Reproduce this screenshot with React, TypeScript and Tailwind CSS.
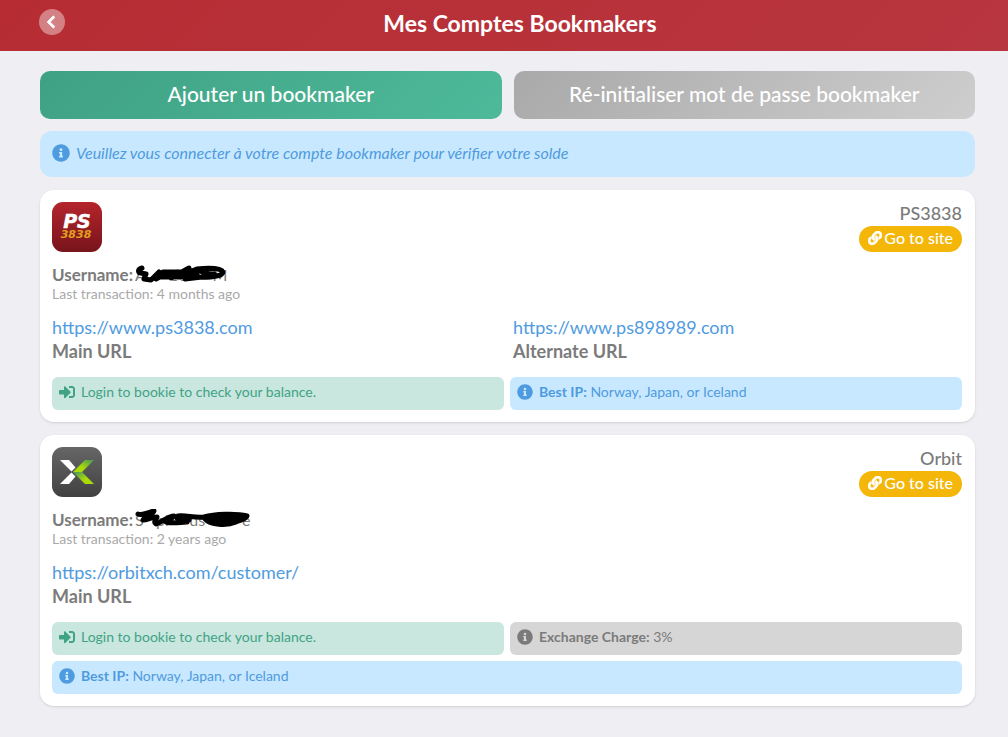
import type { ReactNode } from "react";
import { FaChevronLeft, FaInfoCircle, FaLink, FaSignInAlt } from "react-icons/fa";

type Notice = {
  tone: "green" | "blue" | "gray";
  label?: string;
  text: string;
  wide?: boolean;
};

type Bookmaker = {
  name: string;
  logo: ReactNode;
  username: string;
  mask: ReactNode;
  lastTransaction: string;
  urls: { href: string; label: string }[];
  notices: Notice[];
};

const TONES = {
  green: "bg-[#c9e6df] text-[#3fa384]",
  blue: "bg-[#c8e8ff] text-[#4f9be0]",
  gray: "bg-[#d6d6d6] text-[#7b7b7b]",
};

function PsLogo() {
  return (
    <svg viewBox="0 0 50 50" className="size-[50px]" role="img" aria-label="PS3838">
      <defs>
        <linearGradient id="ps-bg" x1="0" y1="0" x2="0" y2="1">
          <stop offset="0" stopColor="#b5242c" />
          <stop offset="1" stopColor="#77141b" />
        </linearGradient>
      </defs>
      <rect width="50" height="50" rx="11" fill="url(#ps-bg)" />
      <text
        x="25"
        y="26"
        textAnchor="middle"
        fill="#fff"
        stroke="#fff"
        strokeWidth="0.5"
        fontFamily="DejaVu Sans, sans-serif"
        fontSize="19"
        fontWeight="700"
        fontStyle="italic"
      >
        PS
      </text>
      <text
        x="24"
        y="36"
        textAnchor="middle"
        fill="#e0a020"
        fontFamily="DejaVu Sans, sans-serif"
        fontSize="11"
        fontWeight="700"
        fontStyle="italic"
      >
        3838
      </text>
    </svg>
  );
}

function OrbitLogo() {
  return (
    <svg viewBox="0 0 50 50" className="size-[50px]" role="img" aria-label="Orbit">
      <defs>
        <linearGradient id="orbit-bg" x1="0" y1="0" x2="0" y2="1">
          <stop offset="0" stopColor="#666" />
          <stop offset="1" stopColor="#414141" />
        </linearGradient>
        <linearGradient id="orbit-top" x1="0" y1="1" x2="1" y2="0">
          <stop offset="0.4" stopColor="#a9db06" />
          <stop offset="0.9" stopColor="#55a052" />
        </linearGradient>
        <linearGradient id="orbit-bottom" x1="0" y1="0" x2="1" y2="1">
          <stop offset="0.1" stopColor="#55a052" />
          <stop offset="0.6" stopColor="#a9db06" />
        </linearGradient>
      </defs>
      <rect width="50" height="50" rx="11" fill="url(#orbit-bg)" />
      <path d="M8 13h9l6.500 7.500-4 4z" fill="#fff" />
      <path d="M8 37h9l6.500-7.500-4-4z" fill="#fff" />
      <path d="M33 13h9L30 25h-9z" fill="url(#orbit-top)" />
      <path d="M21 25h9l12 12h-9z" fill="url(#orbit-bottom)" />
    </svg>
  );
}

function ShortMask() {
  return (
    <svg
      viewBox="0 0 92 20"
      className="absolute left-0 top-0 h-5 w-[92px]"
      fill="none"
      stroke="#000"
      strokeWidth="5"
      strokeLinecap="round"
      strokeLinejoin="round"
      aria-hidden="true"
    >
      <path d="M7 4C3 5 2 9 6 9l5 1-2 5 7 1 8-8-3 7 13-7 2 6L54 4 40 13l22-8-12 10 17-2c7 1 21-1 21-5C86 4 72 4 62 5c5 4 10 5 17 5M20 13h14l8-5M28 8h20M44 13l18-3" />
    </svg>
  );
}

function LongMask() {
  return (
    <svg
      viewBox="0 0 118 20"
      className="absolute left-0 top-0 h-5 w-[118px]"
      fill="none"
      stroke="#000"
      strokeWidth="5"
      strokeLinecap="round"
      strokeLinejoin="round"
      aria-hidden="true"
    >
      <path d="M3 5c5 2 10-2 16-3-1 4-9 5-11 9 5 0 8-3 14-3-2 4-4 5-1 7 6-2 12-8 18-8-1 3-8 4-8 6 7 2 15 0 21 0-2-3-6-4-9-6 8-1 16 2 26 1 10-3 32-4 43-1-1 4-8 4-11 6-9 4-26 3-31-3 10 4 22 4 36-1-12 0-22 0-30 0M42 9l12 2" />
    </svg>
  );
}

const BOOKMAKERS: Bookmaker[] = [
  {
    name: "PS3838",
    logo: <PsLogo />,
    username: "A      8S      M",
    mask: <ShortMask />,
    lastTransaction: "4 months ago",
    urls: [
      { href: "https://www.ps3838.com", label: "Main URL" },
      { href: "https://www.ps898989.com", label: "Alternate URL" },
    ],
    notices: [
      { tone: "green", text: "Login to bookie to check your balance." },
      { tone: "blue", label: "Best IP:", text: "Norway, Japan, or Iceland" },
    ],
  },
  {
    name: "Orbit",
    logo: <OrbitLogo />,
    username: "S   pi     us         e",
    mask: <LongMask />,
    lastTransaction: "2 years ago",
    urls: [{ href: "https://orbitxch.com/customer/", label: "Main URL" }],
    notices: [
      { tone: "green", text: "Login to bookie to check your balance." },
      { tone: "gray", label: "Exchange Charge:", text: "3%" },
      { tone: "blue", label: "Best IP:", text: "Norway, Japan, or Iceland", wide: true },
    ],
  },
];

function NoticeBar({ notice }: { notice: Notice }) {
  const Icon = notice.tone === "green" ? FaSignInAlt : FaInfoCircle;

  return (
    <p
      className={`flex h-[33px] items-center gap-1.5 rounded-md px-[7px] pb-1 text-sm ${TONES[notice.tone]} ${notice.wide ? "col-span-2" : ""}`}
    >
      <Icon className="size-4 shrink-0" />
      <span>
        {notice.label && <b>{notice.label}</b>} {notice.text}
      </span>
    </p>
  );
}

function BookmakerCard({ bookmaker }: { bookmaker: Bookmaker }) {
  return (
    <article className="rounded-[14px] bg-white py-3 pr-[13px] pl-3 shadow-sm">
      <div className="flex items-start justify-between">
        {bookmaker.logo}
        <div className="flex flex-col items-end">
          <h2 className="pb-0.5 text-lg leading-[22px] font-medium">{bookmaker.name}</h2>
          <a
            href={bookmaker.urls[0].href}
            className="flex h-[26px] items-center gap-0.5 rounded-full bg-[#f3b609] px-[9px] pb-0.5 text-base font-medium text-white"
          >
            <FaLink className="size-3.5" strokeWidth={30} />
            Go to site
          </a>
        </div>
      </div>

      <div className="mt-3">
        <p className="flex gap-0.5 text-base leading-[21px]">
          <b className="text-[17px]">Username:</b>
          <span className="relative whitespace-pre">
            {bookmaker.username}
            {bookmaker.mask}
          </span>
        </p>
        <p className="text-sm leading-[18px] text-[#a9a9a9]">
          Last transaction: {bookmaker.lastTransaction}
        </p>
      </div>

      <div className="mt-3 grid grid-cols-2 gap-3">
        {bookmaker.urls.map((url) => (
          <div key={url.href} className="text-lg leading-6">
            <a href={url.href} className="block text-[#4f9be0]">
              {url.href}
            </a>
            <p className="font-bold">{url.label}</p>
          </div>
        ))}
      </div>

      <div className="mt-3.5 grid grid-cols-2 gap-1.5">
        {bookmaker.notices.map((notice) => (
          <NoticeBar key={notice.text} notice={notice} />
        ))}
      </div>
    </article>
  );
}

export default function App() {
  return (
    <div className="min-h-screen bg-[#efeef3] font-[Lato,sans-serif] text-[#7b7b7b]">
      <header className="flex h-[51px] items-start bg-linear-135 from-[#b72c33] to-[#b8363f] pt-2 pr-[33px] pl-[39px]">
        <button
          type="button"
          aria-label="Retour"
          className="mt-px flex size-[26px] items-center justify-center rounded-full bg-white/40 pr-0.5 text-white"
        >
          <FaChevronLeft className="size-3.5" strokeWidth={30} />
        </button>
        <h1 className="flex-1 text-center text-[23px] leading-[30px] font-bold text-white">
          Mes Comptes Bookmakers
        </h1>
      </header>

      <main className="flex flex-col gap-[13px] pt-5 pr-[33px] pb-[31px] pl-10">
        <div className="flex flex-col gap-3">
          <div className="grid grid-cols-2 gap-3 text-[21px] text-white">
            <button
              type="button"
              className="h-12 rounded-[10px] bg-linear-135 from-[#3fa183] to-[#4eba9a] pb-0.5 font-medium"
            >
              Ajouter un bookmaker
            </button>
            <button
              type="button"
              className="h-12 rounded-[10px] bg-linear-135 from-[#a9a9a9] to-[#cecece] pb-0.5 font-medium"
            >
              Ré-initialiser mot de passe bookmaker
            </button>
          </div>
          <p className="flex h-[46px] items-center gap-1.5 rounded-xl bg-[#c8e8ff] px-3 pb-0.5 text-base text-[#4f9be0]">
            <FaInfoCircle className="size-[18px] shrink-0" />
            <i>Veuillez vous connecter à votre compte bookmaker pour vérifier votre solde</i>
          </p>
        </div>

        {BOOKMAKERS.map((bookmaker) => (
          <BookmakerCard key={bookmaker.name} bookmaker={bookmaker} />
        ))}
      </main>
    </div>
  );
}
